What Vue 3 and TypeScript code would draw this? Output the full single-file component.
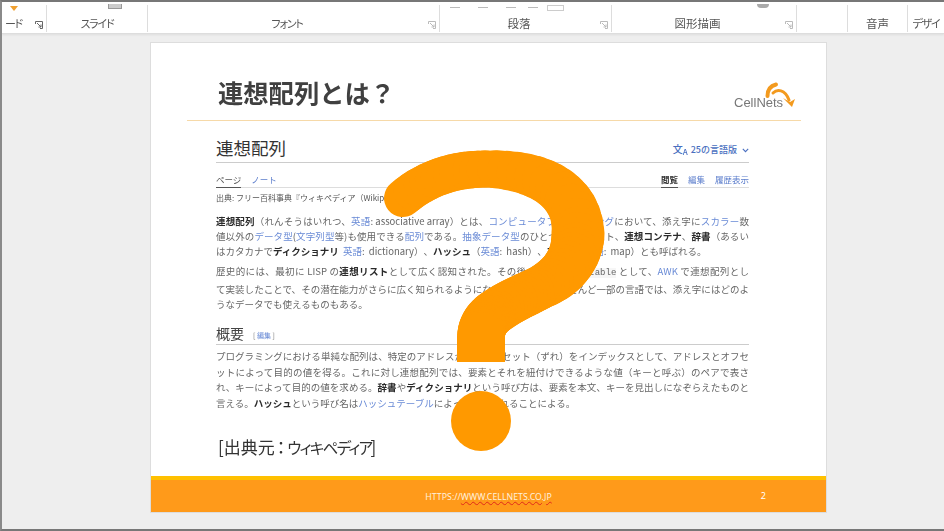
<template>
  <div class="stage">
    <!-- Ribbon -->
    <header class="ribbon">
      <div v-for="group in ribbonGroups" :key="group.label" :class="['group', { 'has-launcher': group.launcher }]" :style="{ width: group.width + 'px' }">
        <span :class="['group-label', { tight: group.tight }]">{{ group.label }}</span>
        <svg v-if="group.launcher" class="launcher" width="8" height="8" viewBox="0 0 8 8">
          <path d="M.5 3V.5H7.5V7.5H5M2 2L6 6M6 3.5V6H3.5" fill="none" :stroke="group.launcherColor" stroke-width="1" />
        </svg>
      </div>
      <i class="stub tri"></i>
      <i class="stub box"></i>
      <i class="stub dash d1"></i>
      <i class="stub dash d2"></i>
      <i class="stub dash d3"></i>
      <i class="stub dash d4"></i>
      <i class="stub box2"></i>
      <i class="stub cap"></i>
    </header>

    <!-- Slide -->
    <main class="slide">
      <div class="slide-head">
        <h1>連想配列とは？</h1>
        <div class="logo">
          <span class="logo-text">CellNets</span>
          <svg class="logo-mark" width="32" height="30" viewBox="0 0 32 30">
            <path d="M3.5 15C3.5 9 6 5 12 3.5" fill="none" stroke="#f39a1e" stroke-width="4" stroke-linecap="round" />
            <path d="M9 12C13 8 21 8 25 19" fill="none" stroke="#f39a1e" stroke-width="3" stroke-linecap="round" />
            <path d="M19 17L28 26L31 18L26 21Z" fill="#f39a1e" />
          </svg>
        </div>
      </div>

      <article class="wiki">
        <div class="wiki-title">
          <h2>連想配列</h2>
          <span class="lang"><span class="lang-icon">文<small>A</small></span>25の言語版
            <svg width="7" height="5" viewBox="0 0 7 5"><path d="M.8 .8L3.5 3.6L6.2 .8" fill="none" stroke="#4a6fc0" stroke-width="1.1" /></svg>
          </span>
        </div>
        <nav class="tabs">
          <span class="tab active">ページ</span>
          <span class="tab link">ノート</span>
          <span class="spacer"></span>
          <span class="tab active strong">閲覧</span>
          <span class="tab link">編集</span>
          <span class="tab link">履歴表示</span>
        </nav>
        <div class="source">出典: フリー百科事典『ウィキペディア（Wikipedia）』</div>

        <section class="para first">
          <div class="line"><b>連想配列</b>（れんそうはいれつ、<a>英語</a>: associative array）とは、<a>コンピュータプログラミング</a>において、添え字に<a>スカラー</a>数</div>
          <div class="line">値以外の<a>データ型</a>(<a>文字列型</a>等)も使用できる<a>配列</a>である。<a>抽象データ型</a>のひとつ。連想リスト、<b>連想コンテナ</b>、<b>辞書</b>（あるい</div>
          <div class="line last wide">はカタカナで<b>ディクショナリ</b> <a>英語</a>: dictionary）、<b>ハッシュ</b>（<a>英語</a>: hash）、<b>マップ</b>（<a>英語</a>: map）とも呼ばれる。</div>
        </section>
        <section class="para second">
          <div class="line">歴史的には、最初に LISP の<b>連想リスト</b>として広く認知された。その後、<a>SNOBOL</a> の <code>table</code> として、<a>AWK</a> で連想配列とし</div>
          <div class="line">て実装したことで、その潜在能力がさらに広く知られるようになった。現在ではほとんど一部の言語では、添え字にはどのよ</div>
          <div class="line last">うなデータでも使えるものもある。</div>
        </section>

        <div class="wiki-sub">
          <h3>概要</h3>
          <span class="edit">[ <a>編集</a> ]</span>
        </div>
        <section class="para third">
          <div class="line">プログラミングにおける単純な配列は、特定のアドレスからのオフセット（ずれ）をインデックスとして、アドレスとオフセ</div>
          <div class="line">ットによって目的の値を得る。これに対し連想配列では、要素とそれを紐付けできるような値（キーと呼ぶ）のペアで表さ</div>
          <div class="line">れ、キーによって目的の値を求める。<b>辞書</b>や<b>ディクショナリ</b>という呼び方は、要素を本文、キーを見出しになぞらえたものと</div>
          <div class="line last">言える。<b>ハッシュ</b>という呼び名は<a>ハッシュテーブル</a>によって実装されることによる。</div>
        </section>
      </article>

      <p class="credit">[出典元<span class="colon">：</span><span class="kana">ウィキペディア</span>]</p>

      <footer class="slide-foot">
        <span class="url">HTTPS://<u>WWW.CELLNETS.CO.JP</u></span>
        <span class="page-no">2</span>
      </footer>
    </main>

    <!-- Big question mark over the slide -->
    <svg class="question" width="944" height="531" viewBox="0 0 944 531">
      <path v-for="(seg, i) in questionSegments" :key="i" :d="seg.d" :stroke-width="seg.width" fill="none" stroke="#ff9900" stroke-linecap="round" />
      <rect x="457" y="336" width="48" height="26" fill="#ff9900" />
      <circle cx="481" cy="421" r="30" fill="#ff9900" />
    </svg>
  </div>
</template>

<script setup lang="ts">
interface RibbonGroup {
  label: string;
  width: number;
  launcher?: boolean;
  launcherColor?: string;
  tight?: boolean;
}

interface Segment {
  d: string;
  width: number;
}

type Point = [number, number];

interface Piece {
  pts: [Point, Point, Point, Point];
  from: number;
  to: number;
}

const ribbonGroups: RibbonGroup[] = [
  { label: 'ード', width: 45, launcher: true, launcherColor: '#666', tight: true },
  { label: 'スライド', width: 101, tight: true },
  { label: 'フォント', width: 292, launcher: true, launcherColor: '#bbb', tight: true },
  { label: '段落', width: 172, launcher: true, launcherColor: '#bbb' },
  { label: '図形描画', width: 185, launcher: true, launcherColor: '#bbb' },
  { label: '', width: 51 },
  { label: '音声', width: 60 },
  { label: 'デザイ', width: 36, tight: true }
];

// Centre line of the question mark hook, with stroke width at each end
const HOOK: Piece[] = [
  { pts: [[403, 198], [424, 180], [452, 169], [485, 169]], from: 38, to: 37 },
  { pts: [[485, 169], [538, 169], [578, 190], [578, 233]], from: 37, to: 53 },
  { pts: [[578, 233], [578, 258], [563, 276], [543, 286]], from: 53, to: 44 },
  { pts: [[543, 286], [526, 295], [510, 301], [495, 312]], from: 44, to: 46 },
  { pts: [[495, 312], [485, 319], [481, 328], [481, 338]], from: 46, to: 48 }
];

const STEPS = 14;

const bezier = (p: Piece['pts'], t: number): Point => {
  const u = 1 - t;
  const at = (i: 0 | 1): number =>
    u * u * u * p[0][i] + 3 * u * u * t * p[1][i] + 3 * u * t * t * p[2][i] + t * t * t * p[3][i];
  return [at(0), at(1)];
};

// Short strokes with a growing width give the hook its taper
const questionSegments: Segment[] = HOOK.flatMap((piece) =>
  Array.from({ length: STEPS }, (_, i) => {
    const a = bezier(piece.pts, i / STEPS);
    const b = bezier(piece.pts, (i + 1) / STEPS);
    return {
      d: `M${a[0].toFixed(1)} ${a[1].toFixed(1)}L${b[0].toFixed(1)} ${b[1].toFixed(1)}`,
      width: piece.from + ((piece.to - piece.from) * i) / STEPS
    };
  })
);
</script>

<style>
html,
body {
  margin: 0;
  background: #eee;
}
</style>

<style scoped>
.stage {
  position: relative;
  width: 944px;
  height: 531px;
  box-sizing: border-box;
  overflow: hidden;
  background: #eeeeee;
  border-top: 2px solid #777;
  border-left: 2px solid #8a8a8a;
  border-bottom: 2px solid #777;
  font-family: "Noto Sans CJK JP", "Noto Sans", sans-serif;
  color: #555;
}

.ribbon {
  position: relative;
  display: flex;
  height: 31px;
  background: #fff;
  border-bottom: 1px solid #ddd;
  box-shadow: 0 1px 2px #ddd;
  filter: blur(0.5px);
}

.group {
  position: relative;
  flex: none;
  box-sizing: border-box;
  height: 27px;
  margin-top: 3px;
  border-right: 1px solid #ddd;
  text-align: center;
}

.group.has-launcher {
  padding-right: 13px;
}

.group-label {
  display: block;
  margin-top: 11px;
  font-size: 11.5px;
  line-height: 15px;
  color: #555;
  white-space: nowrap;
  font-feature-settings: "palt";
}

.group-label.tight {
  font-size: 11px;
  letter-spacing: -1.2px;
}

.group:first-child {
  padding-right: 0;
}

.group:first-child .group-label {
  text-align: left;
  padding-left: 3px;
}

.group:last-of-type {
  border-right: 0;
}

.launcher {
  position: absolute;
  right: 3px;
  top: 16px;
}

.stub {
  position: absolute;
  display: block;
}

.tri {
  left: 8px;
  top: 4px;
  border: 4px solid transparent;
  border-top: 5px solid #f0a030;
  border-bottom: 0;
}

.box {
  left: 106px;
  top: 2px;
  width: 14px;
  height: 5px;
  background: #ccc;
  border: 1px solid #999;
  border-top: 0;
  box-sizing: border-box;
}

.dash {
  top: 5px;
  width: 10px;
  height: 1px;
  background: #bbb;
}

.d1 { left: 448px; }
.d2 { left: 476px; }
.d3 { left: 504px; }
.d4 { left: 526px; }

.box2 {
  left: 545px;
  top: 3px;
  width: 15px;
  height: 4px;
  border: 1px solid #ccc;
}

.cap {
  left: 755px;
  top: 2px;
  width: 12px;
  height: 4px;
  background: #aaa;
  border-radius: 0 0 6px 6px;
}

.slide {
  position: absolute;
  left: 149px;
  top: 41px;
  box-sizing: border-box;
  display: flex;
  flex-direction: column;
  width: 675px;
  height: 469px;
  background: #fff;
  outline: 1px solid #ddd;
  filter: blur(0.5px);
}

.slide-head {
  position: relative;
  height: 77px;
  margin: 0 25px 0 36px;
  border-bottom: 1px solid #f6d9a8;
}

h1 {
  margin: 0;
  padding: 31px 0 0 31px;
  font-size: 25.3px;
  line-height: 36px;
  font-weight: 700;
  color: #404040;
}

.logo {
  position: absolute;
  right: 5px;
  top: 38px;
  width: 62px;
  height: 32px;
}

.logo-text {
  position: absolute;
  left: 0;
  bottom: 3px;
  font-family: "Liberation Sans", sans-serif;
  font-size: 13px;
  line-height: 15px;
  color: #777;
}

.logo-mark {
  position: absolute;
  right: 0;
  top: 0;
}

.wiki {
  width: 533px;
  margin-left: 65px;
  font-size: 9.5px;
}

.wiki-title {
  display: flex;
  align-items: flex-end;
  justify-content: space-between;
  box-sizing: border-box;
  height: 42px;
  padding-bottom: 2px;
  border-bottom: 1px solid #ccc;
}

h2 {
  margin: 0;
  font-size: 17.5px;
  line-height: 24px;
  font-weight: 400;
  color: #333;
}

.lang {
  display: flex;
  align-items: center;
  gap: 3px;
  margin-bottom: 3px;
  font-size: 9px;
  line-height: 14px;
  font-weight: 500;
  color: #4a6fc0;
}

.lang svg {
  margin-left: 2px;
  margin-top: 1px;
}

.lang-icon {
  font-size: 10px;
}

.lang-icon small {
  font-size: 8px;
  position: relative;
  top: 2px;
}

.tabs {
  display: flex;
  gap: 10px;
  align-items: flex-end;
  height: 24px;
  border-bottom: 1px solid #ddd;
  font-size: 8.5px;
  line-height: 13px;
}

.tabs .spacer {
  flex: 1;
}

.tab {
  box-sizing: border-box;
  height: 15px;
  margin-bottom: -1px;
}

.tab.active {
  border-bottom: 1px solid #555;
}

.tab.link {
  color: #5b7dcc;
}

.tab.strong {
  color: #333;
  font-weight: 700;
}

.source {
  margin-top: 3px;
  font-size: 8px;
  line-height: 14px;
  color: #555;
}

.para {
  font-size: 9.5px;
  line-height: 15.4px;
  color: #666;
  text-spacing-trim: space-all;
}

.para.first {
  margin-top: 8.5px;
}

.para.second {
  margin-top: 4.5px;
}

.para.third {
  margin-top: 4px;
}

.line {
  white-space: nowrap;
  text-align: justify;
  text-align-last: justify;
}

.line.last {
  text-align-last: left;
}

.line.wide {
  word-spacing: 2px;
}

.para b {
  font-weight: 700;
  color: #2a2a2a;
}

a {
  color: #6a8bd6;
}

code {
  font-family: "Liberation Mono", monospace;
  font-size: 9px;
  background: #f6f6f6;
}

.wiki-sub {
  display: flex;
  align-items: flex-end;
  gap: 9px;
  box-sizing: border-box;
  height: 32px;
  margin-top: 1px;
  padding-bottom: 1px;
  border-bottom: 1px solid #ccc;
}

h3 {
  margin: 0;
  font-size: 14px;
  line-height: 20px;
  font-weight: 400;
  color: #444;
}

.edit {
  font-size: 7px;
  line-height: 15px;
  color: #777;
}

.credit {
  margin: 24px 0 0 67px;
  font-size: 17px;
  line-height: 24px;
  color: #333;
  font-feature-settings: "palt";
}

.colon {
  margin: 0 2px;
}

.kana {
  font-size: 15.5px;
  letter-spacing: -1.7px;
  margin-right: -1px;
}

.slide-foot {
  position: relative;
  display: flex;
  justify-content: center;
  align-items: center;
  flex: none;
  box-sizing: border-box;
  height: 36px;
  margin-top: auto;
  padding-top: 1px;
  background: #ff9a1a;
  border-top: 4px solid #ffc000;
  font-family: "Noto Sans", sans-serif;
  font-size: 8.8px;
  color: #fff0dc;
}

.slide-foot u {
  text-decoration: underline wavy #e02a1a 1px;
  text-underline-offset: 1px;
}

.page-no {
  position: absolute;
  right: 60px;
  top: 7px;
  font-size: 9px;
  line-height: 18px;
  color: #fff;
}

.question {
  position: absolute;
  left: -2px;
  top: -2px;
}
</style>
